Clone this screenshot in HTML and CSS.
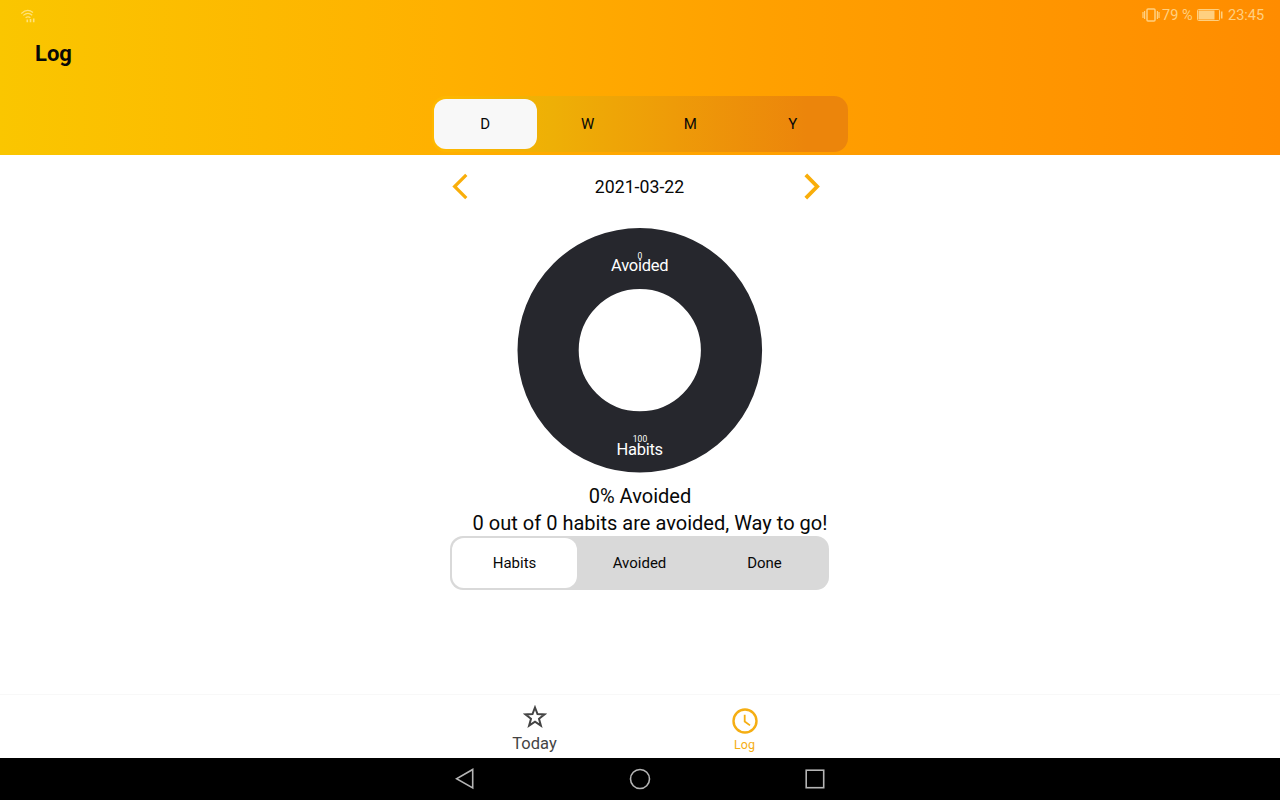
FILE: index.html
```html
<!DOCTYPE html>
<html lang="en">
<head>
<meta charset="utf-8">
<title>Log</title>
<link rel="stylesheet" href="styles.css">
</head>
<body>
<div class="app">
  <header class="header">
    <div class="status">
      <svg class="wifi" width="16" height="14" viewBox="0 0 16 14" fill="none" stroke="currentColor" stroke-width="1.2">
        <path d="M.3 4.600Q6 -1.200 12 3.400M2.300 6.400Q7 2.600 11.200 6.200M4.600 8.800Q7 6.800 9.400 8.800"/>
        <path d="M6.300 10.500v2.800M9.500 10v3.300M12.700 9.500v3.800" stroke-width="1.600"/>
      </svg>
      <div class="status-right">
        <svg width="18" height="14" viewBox="0 0 18 14" fill="none" stroke="currentColor" stroke-width="1.500">
          <rect x="5" y="1" width="8" height="12" rx="1"/>
          <path d="M1 4v6M2.600 3v8M15.400 3v8M17 4v6" stroke-width="1.200"/>
        </svg>
        <span class="percent">79 %</span>
        <svg class="battery" width="26" height="12" viewBox="0 0 26 12" fill="none" stroke="currentColor">
          <rect x=".5" y=".5" width="22" height="11" rx="1"/>
          <rect x="1.500" y="1.500" width="16" height="9" fill="currentColor" stroke="none"/>
          <path d="M24.700 2.500v7" stroke-width="1.600"/>
        </svg>
        <span class="time">23:45</span>
      </div>
    </div>
    <h1 class="title">Log</h1>
    <div class="segments period">
      <button class="segment selected">D</button>
      <button class="segment">W</button>
      <button class="segment">M</button>
      <button class="segment">Y</button>
    </div>
  </header>
  <main class="content">
    <div class="date-row">
      <svg width="16" height="28" viewBox="0 0 16 28" fill="none" stroke="currentColor" stroke-width="3.200"><path d="M14.300 1.800L2.600 13.500l11.700 11.700"/></svg>
      <span class="date">2021-03-22</span>
      <svg width="16" height="28" viewBox="0 0 16 28" fill="none" stroke="currentColor" stroke-width="3.800"><path d="M1.800 1.900L13.200 13.500 1.800 25.100"/></svg>
    </div>
    <svg class="donut" width="246" height="246" viewBox="0 0 246 246">
      <circle cx="122.800" cy="123.200" r="91.700" fill="none" stroke="#26272d" stroke-width="61.200"/>
      <g fill="#fff" text-anchor="middle">
        <text class="value" x="123" y="32">0</text>
        <text class="name" x="122.800" y="44" textLength="57.500">Avoided</text>
        <text class="value" x="123" y="215">100</text>
        <text class="name" x="122.800" y="228" textLength="46.500">Habits</text>
      </g>
    </svg>
    <p class="summary">0% Avoided</p>
    <p class="summary message">0 out of 0 habits are avoided, Way to go!</p>
    <div class="segments filter">
      <button class="segment selected">Habits</button>
      <button class="segment">Avoided</button>
      <button class="segment">Done</button>
    </div>
  </main>
  <nav class="tabs">
    <a class="tab today">
      <svg width="24" height="24" viewBox="0 0 24 24" fill="none" stroke="currentColor" stroke-width="2"><path d="M12 2.500L14.500 9.100 21.500 9.400 16 13.800 17.900 20.600 12 16.700 6.100 20.600 8 13.800 2.500 9.400 9.500 9.100Z"/></svg>
      <span>Today</span>
    </a>
    <a class="tab log">
      <svg width="26" height="26" viewBox="0 0 26 26" fill="none" stroke="currentColor" stroke-width="2.400"><circle cx="13" cy="13" r="11.500"/><path d="M12.700 6.700V13.500L18 17.400" stroke-width="1.800"/></svg>
      <span>Log</span>
    </a>
  </nav>
  <footer class="system">
    <svg width="20" height="22" viewBox="0 0 20 22"><path d="M17.700 1.500V20L1.500 10.800Z"/></svg>
    <svg width="22" height="22" viewBox="0 0 22 22"><circle cx="11" cy="11" r="9.500"/></svg>
    <svg width="20" height="22" viewBox="0 0 20 22"><rect x="1.200" y="2.200" width="17.500" height="17.500"/></svg>
  </footer>
</div>
</body>
</html>
```
FILE: styles.css
```css
* { box-sizing: border-box; }
body { margin: 0; font-family: Roboto, sans-serif; color: #080808; }
.app { width: 1280px; height: 800px; display: flex; flex-direction: column; background: #fff; overflow: hidden; }
.header { height: 155px; background: linear-gradient(90deg, #fac600, #ffb000 35%, #ffa000 60%, #ff8c00); display: flex; flex-direction: column; }
.status { height: 30px; padding: 0 15px 0 21px; display: flex; align-items: center; justify-content: space-between; color: #ffd080; }
.wifi { color: #ffe27a; margin-top: 2px; }
.status-right { display: flex; align-items: center; font-size: 14.500px; }
.percent { margin-left: 2px; width: 35px; white-space: nowrap; }
.battery { margin-right: 5px; }
.time { font-size: 14.500px; width: 37px; white-space: nowrap; }
.title { margin: 10px 0 0 35px; font-size: 22px; line-height: 28px; font-weight: 700; color: #080808; }
.segments { display: flex; }
.segment { flex: 1; border: 0; padding: 0; background: none; font: 15px Roboto, sans-serif; color: #080808; border-radius: 12px; }
.period { width: 416px; height: 56px; margin: 28px 0 0 432px; padding: 2.500px 4px 3.500px 2px; border-radius: 14px; background: linear-gradient(90deg, #ffb800, #eeb006 28%, #ee9b08 58%, #ec850b 90%); }
.period .selected { background: #f8f8f8; }
.content { flex: 1; display: flex; flex-direction: column; align-items: center; }
.date-row { width: 368px; height: 63px; margin-left: -9px; display: flex; align-items: center; justify-content: space-between; color: #f9ae0a; }
.date { margin-left: 8px; font-size: 17.700px; color: #080808; }
.donut { margin-top: 9px; display: block; }
.value { font-size: 8.500px; }
.name { font-size: 16.500px; }
.summary { margin: 10px 0 0; font-size: 20.050px; line-height: 27px; white-space: nowrap; }
.message { margin: 0 0 0 20px; }
.filter { width: 379px; height: 54px; margin: -1.500px 0 0 -1px; padding: 2px; border-radius: 13px; background: #d9d9d9; }
.filter .selected { background: #fff; }
.tabs { height: 64px; border-top: 1px solid #f8f8f8; padding-left: 429.500px; display: flex; }
.tab { width: 210px; display: flex; flex-direction: column; align-items: center; }
.today { color: #444; font-size: 16.500px; padding-top: 10px; }
.today span { line-height: 20px; margin-top: 5px; }
.log { color: #f5ae13; font-size: 12.500px; padding-top: 13px; }
.log span { line-height: 16px; margin-top: 3px; }
.system { height: 42px; background: #000; display: flex; align-items: center; justify-content: space-between; padding: 0 455px; }
.system svg { fill: none; stroke: #b5b5b5; stroke-width: 1.600; }
```
